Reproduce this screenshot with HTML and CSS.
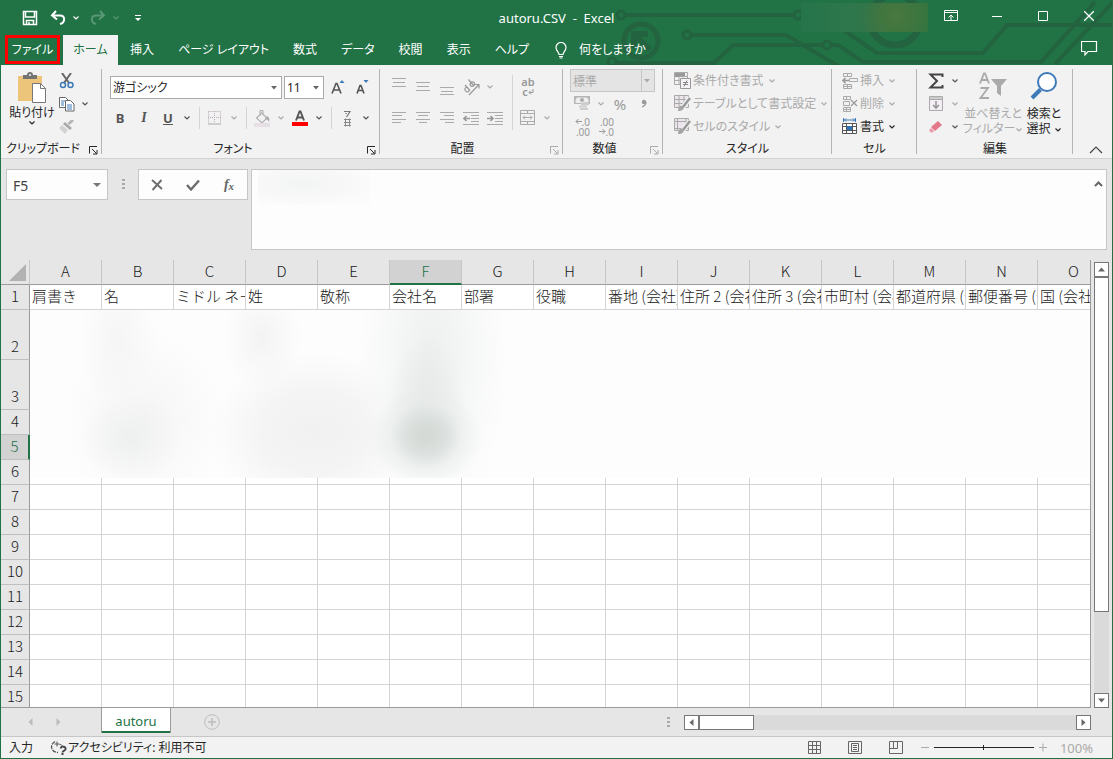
FILE: index.html
```html
<!DOCTYPE html>
<html lang="ja">
<head>
<meta charset="utf-8">
<meta name="viewport" content="width=device-width, initial-scale=1">
<title>autoru.CSV - Excel</title>
<link rel="stylesheet" href="styles.css">
</head>
<body>
<svg class="defs" aria-hidden="true">
  <symbol id="chev" viewBox="0 0 8 6"><path d="M1.5 1.5 4 4 6.500 1.500" fill="none" stroke="currentColor" stroke-width="1.200"/></symbol>
  <symbol id="tri" viewBox="0 0 8 6"><path d="M1 1h6L4 4.500z" fill="currentColor"/></symbol>
  <symbol id="launch" viewBox="0 0 9 9"><path d="M.5 7.500V.5H8M3 3l4.500 4.500M8 4v4H4" fill="none" stroke="currentColor"/></symbol>
</svg>
<div class="window">
  <header class="top">
    <svg class="circuit" viewBox="0 0 513 65" aria-hidden="true">
      <g fill="none" stroke="#23633f" stroke-width="4">
        <circle cx="21" cy="15" r="4" stroke-width="3"/><path d="M25 15h170"/>
        <circle cx="198" cy="15" r="4" stroke-width="3"/>
        <circle cx="41" cy="41" r="17" stroke-width="5"/><path d="M34 48V34h14M34 34l16 16" stroke-width="6"/>
        <circle cx="87" cy="35" r="4" stroke-width="3"/><path d="M91 35h95l54 32"/>
        <circle cx="12" cy="62" r="4" stroke-width="3"/><path d="M16 63h98l19-18h91"/>
        <circle cx="227" cy="45" r="4" stroke-width="3"/><path d="M231 45h7l25 17h178l54-60"/>
        <path d="M239 27l38 26h106l24-28h106M455 64l58-62"/>
        <circle cx="295" cy="20" r="25" stroke-width="7"/>
      </g>
    </svg>
    <div class="titlebar">
      <div class="quick">
        <button aria-label="上書き保存"><svg width="16" height="16" viewBox="0 0 16 16"><path d="M1.500 1.500h13v13h-13zM3.500 2v5h9V2M4.500 14.500v-4h7v4M7 12v2" fill="none" stroke="#fff" stroke-width="1.500"/></svg></button>
        <button aria-label="元に戻す"><svg width="16" height="16" viewBox="0 0 16 16"><path d="M6 1 2 5.500 7 9.500M2.500 5.500h7.500c5.500 0 5.500 7 0 8.500" fill="none" stroke="#fff" stroke-width="2"/></svg></button>
        <button class="narrow" aria-label="元に戻す一覧"><svg width="8" height="6"><use href="#chev"/></svg></button>
        <button class="dim" aria-label="やり直し"><svg width="16" height="16" viewBox="0 0 16 16"><path d="M10 1l4 4.500-5 4M13.500 5.500H6c-5.500 0-5.500 7 0 8.500" fill="none" stroke="#fff" stroke-width="2"/></svg></button>
        <button class="narrow dim" aria-label="やり直し一覧"><svg width="8" height="6"><use href="#chev"/></svg></button>
        <button aria-label="クイック アクセスのカスタマイズ"><svg width="8" height="8" viewBox="0 0 8 8"><path d="M1 1.500h6" stroke="#fff"/><path d="M1 4h6L4 7z" fill="#fff"/></svg></button>
      </div>
      <h1>autoru.CSV&nbsp; -&nbsp; Excel</h1>
      <div class="sys">
        <div class="account"></div>
        <button aria-label="リボンの表示オプション"><svg width="14" height="12" viewBox="0 0 14 12"><path d="M.5.5h13v10H.5zM.5 2.500h13M7 10V5M4.500 7.500 7 5l2.500 2.500" fill="none" stroke="#fff"/></svg></button>
        <button aria-label="最小化"><svg width="10" height="11" viewBox="0 0 10 11"><path d="M0 5.500h10" stroke="#fff"/></svg></button>
        <button aria-label="最大化"><svg width="10" height="10" viewBox="0 0 10 10"><path d="M.5.5h9v9h-9z" fill="none" stroke="#fff"/></svg></button>
        <button aria-label="閉じる"><svg width="10" height="10" viewBox="0 0 10 10"><path d="M0 0l10 10M10 0 0 10" stroke="#fff" stroke-width="1.300"/></svg></button>
      </div>
    </div>
    <nav class="tabs">
      <button class="file">ファイル</button>
      <button class="on">ホーム</button>
      <button>挿入</button>
      <button>ページ レイアウト</button>
      <button>数式</button>
      <button>データ</button>
      <button>校閲</button>
      <button>表示</button>
      <button>ヘルプ</button>
      <button class="tell"><svg width="12" height="17" viewBox="0 0 12 17"><path d="M4 12.500C4 10 1 9 1 5.500a5 5 0 0 1 10 0C11 9 8 10 8 12.500zM4 14.500h4M4.500 16h3" fill="none" stroke="#fff" stroke-width="1.200"/></svg>何をしますか</button>
      <button class="comment" aria-label="コメント"><svg width="17" height="16" viewBox="0 0 17 16"><path d="M.5.500h15v10H7l-3 3.500v-3.500H.5z" fill="none" stroke="#fff" stroke-width="1.200"/></svg></button>
    </nav>
  </header>

  <section class="ribbon">
    <div class="group clip">
      <div class="body">
        <button class="big"><svg width="30" height="33" viewBox="0 0 30 33"><path d="M1 4h24v25H1z" fill="#edc57a"/><path d="M6 7V3h4a3 3 0 0 1 6 0h4v4z" fill="#737373"/><circle cx="13" cy="3" r="1" fill="#f2f2f2"/><path d="M15.500 11.500h8l5 5v14h-13z" fill="#fff" stroke="#777"/><path d="M23.500 11.500v5h5" fill="none" stroke="#777"/></svg><span>貼り付け</span><svg width="8" height="6"><use href="#chev"/></svg></button>
        <div class="stack">
          <button aria-label="切り取り"><svg width="16" height="16" viewBox="0 0 16 16"><path d="M3 0l7 10M12 0 5 10" stroke="#666" stroke-width="2"/><circle cx="4" cy="12" r="2.500" fill="none" stroke="#3f7ab8" stroke-width="1.500"/><circle cx="11.500" cy="12" r="2.500" fill="none" stroke="#3f7ab8" stroke-width="1.500"/></svg></button>
          <div class="line"><button aria-label="コピー"><svg width="16" height="16" viewBox="0 0 16 16"><path d="M.5 1.500h6l3 3v7h-9z" fill="#fff" stroke="#666"/><path d="M2 5h4M2 7h3M2 9h3" stroke="#3f7ab8"/><path d="M6.500 4.500h5l3.500 3.500v7H6.500z" fill="#fff" stroke="#666"/><path d="M8 9h5M8 11h5M8 13h5" stroke="#3f7ab8"/></svg></button><button class="narrow" aria-label="コピーの一覧"><svg width="8" height="6"><use href="#chev"/></svg></button></div>
          <button aria-label="書式のコピー"><svg width="16" height="14" viewBox="0 0 16 14"><path d="M14 0 9.500 4" stroke="#b5b5b5" stroke-width="3"/><path d="M6 2l7 6-2 2-7-6z" fill="#a9a9a9"/><path d="M3 5l6 5-3 4-6-6z" fill="#d2d2d2"/></svg></button>
        </div>
      </div>
      <footer><span>クリップボード</span><button class="launch" aria-label="クリップボードの設定"><svg width="9" height="9"><use href="#launch"/></svg></button></footer>
    </div>

    <div class="group font">
      <div class="rows">
        <div class="line fontline">
          <label class="combo name"><select aria-label="フォント"><option>游ゴシック</option></select><svg width="8" height="6"><use href="#tri"/></svg></label>
          <label class="combo size"><select aria-label="フォント サイズ"><option>11</option></select><svg width="8" height="6"><use href="#tri"/></svg></label>
          <button aria-label="フォント サイズの拡大"><svg width="14" height="16" viewBox="0 0 14 16"><path d="M1 14.500 5 4.500h1l4 10M2.500 11h6" fill="none" stroke="#555" stroke-width="1.600"/><path d="M8.500 4h5L11 1z" fill="#3f7ab8"/></svg></button>
          <button aria-label="フォント サイズの縮小"><svg width="14" height="16" viewBox="0 0 14 16"><path d="M2 14.500 5 6.500h1l3 8M3 11.500h5" fill="none" stroke="#555" stroke-width="1.600"/><path d="M8.500 1h5L11 4z" fill="#3f7ab8"/></svg></button>
        </div>
        <div class="line">
          <button class="b">B</button><button class="i">I</button><button class="u">U</button><button class="narrow" aria-label="下線の種類"><svg width="8" height="6"><use href="#chev"/></svg></button>
          <i class="sep"></i>
          <button class="off" aria-label="罫線"><svg width="14" height="14" viewBox="0 0 14 14"><path d="M.5.5h12v12M.5.500v12M6.500 0v12M0 6.500h13" fill="none" stroke="#b9adb9" stroke-dasharray="1 1"/><path d="M0 13h13" stroke="#aaa"/></svg></button><button class="narrow off" aria-label="罫線の種類"><svg width="8" height="6"><use href="#chev"/></svg></button>
          <i class="sep"></i>
          <button class="off" aria-label="塗りつぶしの色"><svg width="17" height="17" viewBox="0 0 17 17"><path d="M7.500 3 13 8l-5 5-5.500-5zM6 6V1.500c0-1.500 3-1.500 3 0V4" fill="none" stroke="#b0b0b0" stroke-width="1.200"/><path d="M13 6c2 1 3 3 2 6-1-2-2-3-4-3z" fill="#aaa"/><path d="M0 13h16v4H0z" fill="#e6dfe6"/></svg></button><button class="narrow off" aria-label="塗りつぶしの色の一覧"><svg width="8" height="6"><use href="#chev"/></svg></button>
          <button aria-label="フォントの色"><svg width="16" height="16" viewBox="0 0 16 16"><path d="M4 10.500 7.500 1.500h1l3.500 9M5.500 7.500h5" fill="none" stroke="#555" stroke-width="1.900"/><path d="M0 12h16v4H0z" fill="#f00"/></svg></button><button class="narrow" aria-label="フォントの色の一覧"><svg width="8" height="6"><use href="#chev"/></svg></button>
          <i class="sep"></i>
          <button aria-label="ふりがなの表示"><svg width="9" height="17" viewBox="0 0 9 17"><path d="M1 1.500h6L3.500 7M3 3v1" fill="none" stroke="#777" stroke-width="1.200"/><path d="M1 9.500h7M1 12.500h7M1 15.500h7M2.500 8.500v8M6.500 8.500v8" fill="none" stroke="#888"/></svg></button><button class="narrow" aria-label="ふりがなの一覧"><svg width="8" height="6"><use href="#chev"/></svg></button>
        </div>
      </div>
      <footer><span>フォント</span><button class="launch" aria-label="フォントの設定"><svg width="9" height="9"><use href="#launch"/></svg></button></footer>
    </div>

    <div class="group align off">
      <div class="body">
        <div class="rows">
          <div class="line">
            <button aria-label="上揃え"><svg width="14" height="18"><path d="M0 .5h14M1 4.500h12M0 8.500h14" stroke="#aaa"/></svg></button>
            <button aria-label="上下中央揃え"><svg width="14" height="18"><path d="M0 4.500h14M1 8.500h12M0 12.500h14" stroke="#aaa"/></svg></button>
            <button aria-label="下揃え"><svg width="14" height="18"><path d="M0 9.500h14M1 13.500h12M0 16.500h14" stroke="#aaa"/></svg></button>
            <button aria-label="方向"><svg width="17" height="17" viewBox="0 0 17 17"><path d="M6 16 15.500 6M12 5.500h4v4" fill="none" stroke="#999" stroke-width="1.200"/><path d="M2 6l5 5.500M5.500 9.500C3.500 7 .5 9.500 2.500 11.800S7.500 12 5.500 9.500M5.500.500l5 6M7.500 4c2.500-2.500 5.500.500 3.500 2.500S6 6.500 7.500 4" fill="none" stroke="#999" stroke-width="1.200"/></svg></button><button class="narrow" aria-label="方向の一覧"><svg width="8" height="6"><use href="#chev"/></svg></button>
          </div>
          <div class="line">
            <button aria-label="左揃え"><svg width="14" height="12"><path d="M0 .5h14M0 3.500h10M0 7.500h14M0 10.500h9" stroke="#aaa"/></svg></button>
            <button aria-label="中央揃え"><svg width="14" height="12"><path d="M0 .5h14M2 3.500h10M0 7.500h14M3 10.500h8" stroke="#aaa"/></svg></button>
            <button aria-label="右揃え"><svg width="14" height="12"><path d="M0 .5h14M4 3.500h10M0 7.500h14M5 10.500h9" stroke="#aaa"/></svg></button>
            <button aria-label="インデントを減らす"><svg width="16" height="13" viewBox="0 0 16 13"><path d="M0 .5h16M8 3.500h8M8 6.500h8M8 9.500h8M0 12.500h16" stroke="#aaa"/><path d="M7 6.500H1M3.500 4 1 6.500 3.500 9" fill="none" stroke="#999" stroke-width="1.600"/></svg></button>
            <button aria-label="インデントを増やす"><svg width="16" height="13" viewBox="0 0 16 13"><path d="M0 .5h16M8 3.500h8M8 6.500h8M8 9.500h8M0 12.500h16" stroke="#aaa"/><path d="M0 6.500h6M3.500 4 6 6.500 3.500 9" fill="none" stroke="#999" stroke-width="1.600"/></svg></button>
          </div>
        </div>
        <i class="sep tall"></i>
        <div class="rows">
          <div class="line"><button class="wrap" aria-label="折り返して全体を表示する"><span>ab</span><span>c<svg width="6" height="6" viewBox="0 0 6 6"><path d="M5 0v3.500H1M3 1.500l-2 2 2 2" fill="none" stroke="#999"/></svg></span></button></div>
          <div class="line"><button aria-label="セルを結合して中央揃え"><svg width="16" height="16" viewBox="0 0 16 16"><path d="M.5.5h14v14H.500zM.5 3.500h14M.5 11.500h14M7.500 0v3M7.500 12v3M3 7.500h9M5 5.500l-2 2 2 2M10 5.500l2 2-2 2" fill="none" stroke="#aaa"/></svg></button><button class="narrow" aria-label="結合の一覧"><svg width="8" height="6"><use href="#chev"/></svg></button></div>
        </div>
      </div>
      <footer><span>配置</span><button class="launch" aria-label="配置の設定"><svg width="9" height="9"><use href="#launch"/></svg></button></footer>
    </div>

    <div class="group number off">
      <div class="three">
        <label class="combo format"><select aria-label="表示形式" disabled><option>標準</option></select><svg width="8" height="6"><use href="#tri"/></svg></label>
        <div class="line">
          <button aria-label="通貨表示形式"><svg width="16" height="15" viewBox="0 0 16 15"><path d="M0 0h16v8H0z" fill="#b5b5b5"/><path d="M3 1.500h10l1.500 2v3H10l-3 .5H1.500v-3z" fill="#eee"/><circle cx="8" cy="4" r="2" fill="#aaa"/><path d="M7 8h8M5 10.500h8M6 13h8" stroke="#ccc" stroke-width="2"/></svg></button><button class="narrow" aria-label="通貨の一覧"><svg width="8" height="6"><use href="#chev"/></svg></button>
          <button class="pct">%</button>
          <button aria-label="桁区切りスタイル"><svg width="6" height="9" viewBox="0 0 6 9"><circle cx="3" cy="3" r="2.200" fill="#999"/><path d="M5 3c0 2.500-1.500 4-4 5" fill="none" stroke="#999" stroke-width="1.300"/></svg></button>
        </div>
        <div class="line dec">
          <button aria-label="小数点以下の表示桁数を増やす"><span><svg width="7" height="7" viewBox="0 0 7 7"><path d="M7 3.500H1M3.500 1 1 3.500 3.500 6" fill="none" stroke="#999"/></svg>.0</span><span>.00</span></button>
          <button aria-label="小数点以下の表示桁数を減らす"><span>.00</span><span><svg width="7" height="7" viewBox="0 0 7 7"><path d="M0 3.500h6M3.500 1 6 3.500 3.500 6" fill="none" stroke="#999"/></svg>.0</span></button>
        </div>
      </div>
      <footer><span>数値</span><button class="launch" aria-label="数値の設定"><svg width="9" height="9"><use href="#launch"/></svg></button></footer>
    </div>

    <div class="group style">
      <div class="three off">
        <button class="row"><svg width="17" height="17" viewBox="0 0 17 17"><path d="M.5.5h13v12H.5zM.500 4.500h13M.5 8.500h5M5 .5v12M9 .5v5" fill="none" stroke="#aaa"/><path d="M1 1h4v4H1zM5 1h6v3H5z" fill="#999"/><path d="M6.500 6.500h10v10h-10z" fill="#f5f2f5" stroke="#999"/><path d="M9 10.500h5M9 12.500h5M13 8.500l-3 6" stroke="#888"/></svg>条件付き書式<svg width="8" height="6"><use href="#chev"/></svg></button>
        <button class="row"><svg width="17" height="17" viewBox="0 0 17 17"><path d="M.5.5h14v12H.5zM.5 4.500h14M.5 8.500h14M5 .5v12M10 .5v12" fill="#ece6ec" stroke="#aaa"/><path d="M16 3 9 12" stroke="#f2f2f2" stroke-width="5"/><path d="M16 3 9 12" stroke="#999" stroke-width="2.500"/><path d="M4 16c0-4 2-6 5-5 2 3-1 5-5 5z" fill="#a5a5a5"/></svg>テーブルとして書式設定<svg width="8" height="6"><use href="#chev"/></svg></button>
        <button class="row"><svg width="17" height="17" viewBox="0 0 17 17"><path d="M.5.5h14v12H.5zM.5 3.500h14M.5 10.500h14M3.500 .5v12M12 .5v12" fill="#ece6ec" stroke="#aaa"/><path d="M16 3 9 12" stroke="#f2f2f2" stroke-width="5"/><path d="M16 3 9 12" stroke="#999" stroke-width="2.500"/><path d="M4 16c0-4 2-6 5-5 2 3-1 5-5 5z" fill="#a5a5a5"/></svg>セルのスタイル<svg width="8" height="6"><use href="#chev"/></svg></button>
      </div>
      <footer><span>スタイル</span></footer>
    </div>

    <div class="group cells">
      <div class="three">
        <button class="row off"><svg width="16" height="16" viewBox="0 0 16 16"><path d="M1.500.5h8v3h-8zM1.500 11.500h8v4h-8zM5.500.5v3M5.500 11.500v4M1.500 13.500h8M7.500 5.500h8v3h-8z" fill="none" stroke="#aaa"/><path d="M7 7.500H1M3.500 5 1 7.500 3.500 10" fill="none" stroke="#999" stroke-width="1.600"/></svg>挿入<svg class="end" width="8" height="6"><use href="#chev"/></svg></button>
        <button class="row off"><svg width="16" height="16" viewBox="0 0 16 16"><path d="M1.500.5h7v3h-7zM1.500 11.500h7v4h-7zM4.500.5v3M4.500 11.500v4M1.500 13.500h7M1.500 5.500h6v4h-6z" fill="none" stroke="#aaa"/><path d="M9 4l6 6M15 4l-6 6" stroke="#999" stroke-width="1.300"/></svg>削除<svg class="end" width="8" height="6"><use href="#chev"/></svg></button>
        <button class="row strong"><svg width="16" height="17" viewBox="0 0 16 17"><path d="M1.500 0v4M13.500 0v4M2 2h11M4 .500 2.500 2 4 3.500M11 .5 12.500 2 11 3.500" fill="none" stroke="#3f7ab8"/><path d="M.5 5.500h14v10H.5zM.5 8.500h14M.5 12.500h14M4.500 5.500v10M10.500 5.500v10" fill="#fff" stroke="#555"/><path d="M5 8h5v4H5z" fill="#2f73b6"/></svg>書式<svg width="8" height="6"><use href="#chev"/></svg></button>
      </div>
      <footer><span>セル</span></footer>
    </div>

    <div class="group edit">
      <div class="body">
        <div class="three sums">
          <div class="line"><button aria-label="合計"><svg width="16" height="16" viewBox="0 0 16 16"><path d="M14.500 4V1.500h-12L9 8l-6.500 6.500h12V12" fill="none" stroke="#444" stroke-width="2"/></svg></button><button class="narrow" aria-label="合計の一覧"><svg width="8" height="6"><use href="#chev"/></svg></button></div>
          <div class="line off"><button aria-label="フィル"><svg width="15" height="15" viewBox="0 0 15 15"><path d="M.5.5h13v14H.5zM.5 3.500h13" fill="#f3eef3" stroke="#aaa"/><path d="M1 1h12v2H1z" fill="#ccc"/><path d="M7 5v7M4 9l3 3 3-3" fill="none" stroke="#999" stroke-width="1.600"/></svg></button><button class="narrow" aria-label="フィルの一覧"><svg width="8" height="6"><use href="#chev"/></svg></button></div>
          <div class="line"><button aria-label="クリア"><svg width="14" height="14" viewBox="0 0 14 14"><path d="M9 1l4 4-7 6-4-4z" fill="#e4798a"/><path d="M2 8l3 3-1.500 1.500H2L0 10.500z" fill="#ec9aa7"/></svg></button><button class="narrow" aria-label="クリアの一覧"><svg width="8" height="6"><use href="#chev"/></svg></button></div>
        </div>
        <button class="big off"><svg width="30" height="30" viewBox="0 0 30 30"><path d="M2 12.500 6 2.500h1l4 10M3.500 9h6M2.500 17h7.500L2.500 27h8.500" fill="none" stroke="#a9a9a9" stroke-width="1.800"/><path d="M13 8h16l-6 7v10l-4-3v-7z" fill="#aaa"/></svg><span>並べ替えと<br>フィルター<svg width="8" height="6"><use href="#chev"/></svg></span></button>
        <button class="big"><svg width="30" height="30" viewBox="0 0 30 30"><circle cx="18" cy="11" r="9" fill="#fff" stroke="#3f7ab8" stroke-width="2"/><path d="M11.500 18.500 3 27" stroke="#3f7ab8" stroke-width="4"/></svg><span>検索と<br>選択 <svg width="8" height="6"><use href="#chev"/></svg></span></button>
      </div>
      <footer><span>編集</span></footer>
    </div>
    <button class="collapse" aria-label="リボンを折りたたむ"><svg width="14" height="8" viewBox="0 0 14 8"><path d="M1 7l6-6 6 6" fill="none" stroke="#444" stroke-width="1.200"/></svg></button>
  </section>

  <section class="formula">
    <div class="namebox"><input aria-label="名前ボックス" value="F5"><button aria-label="名前の一覧"><svg width="10" height="6" viewBox="0 0 10 6"><path d="M1 1h8L5 5z" fill="#777"/></svg></button></div>
    <i class="dots"></i>
    <div class="fx">
      <button aria-label="キャンセル"><svg width="12" height="12" viewBox="0 0 12 12"><path d="M1 1l10 9M10.500 1 1.500 11" stroke="#6e6e6e" stroke-width="1.900"/></svg></button>
      <button aria-label="入力"><svg width="14" height="12" viewBox="0 0 14 12"><path d="M1 6l4 4.500L13 1.500" fill="none" stroke="#6e6e6e" stroke-width="2.400"/></svg></button>
      <button class="fn" aria-label="関数の挿入">f<small>x</small></button>
    </div>
    <div class="entry"><textarea aria-label="数式バー"></textarea><div class="haze"></div><button aria-label="数式バーの折りたたみ"><svg width="9" height="6" viewBox="0 0 9 6"><path d="M1 5l3.500-3.500L8 5" fill="none" stroke="#666" stroke-width="2"/></svg></button></div>
  </section>

  <main class="work">
    <div class="sheet">
      <table>
        <colgroup><col class="rh"><col span="15"></colgroup>
        <thead><tr><th class="corner"><svg width="18" height="18" viewBox="0 0 18 18"><path d="M17 0v17H0z" fill="#b2b2b2"/></svg></th><th>A</th><th>B</th><th>C</th><th>D</th><th>E</th><th class="sel">F</th><th>G</th><th>H</th><th>I</th><th>J</th><th>K</th><th>L</th><th>M</th><th>N</th><th>O</th></tr></thead>
        <tbody>
          <tr><th>1</th><td>肩書き</td><td>名</td><td>ミドル ネーム</td><td>姓</td><td>敬称</td><td>会社名</td><td>部署</td><td>役職</td><td>番地 (会社)</td><td>住所 2 (会社)</td><td>住所 3 (会社)</td><td>市町村 (会社)</td><td>都道府県 (会社)</td><td>郵便番号 (会社)</td><td>国 (会社)</td></tr>
          <tr class="tall"><th>2</th><td></td><td></td><td></td><td></td><td></td><td></td><td></td><td></td><td></td><td></td><td></td><td></td><td></td><td></td><td></td></tr>
          <tr class="tall"><th>3</th><td></td><td></td><td></td><td></td><td></td><td></td><td></td><td></td><td></td><td></td><td></td><td></td><td></td><td></td><td></td></tr>
          <tr><th>4</th><td></td><td></td><td></td><td></td><td></td><td></td><td></td><td></td><td></td><td></td><td></td><td></td><td></td><td></td><td></td></tr>
          <tr><th class="sel">5</th><td></td><td></td><td></td><td></td><td></td><td></td><td></td><td></td><td></td><td></td><td></td><td></td><td></td><td></td><td></td></tr>
          <tr><th>6</th><td></td><td></td><td></td><td></td><td></td><td></td><td></td><td></td><td></td><td></td><td></td><td></td><td></td><td></td><td></td></tr>
          <tr><th>7</th><td></td><td></td><td></td><td></td><td></td><td></td><td></td><td></td><td></td><td></td><td></td><td></td><td></td><td></td><td></td></tr>
          <tr><th>8</th><td></td><td></td><td></td><td></td><td></td><td></td><td></td><td></td><td></td><td></td><td></td><td></td><td></td><td></td><td></td></tr>
          <tr><th>9</th><td></td><td></td><td></td><td></td><td></td><td></td><td></td><td></td><td></td><td></td><td></td><td></td><td></td><td></td><td></td></tr>
          <tr><th>10</th><td></td><td></td><td></td><td></td><td></td><td></td><td></td><td></td><td></td><td></td><td></td><td></td><td></td><td></td><td></td></tr>
          <tr><th>11</th><td></td><td></td><td></td><td></td><td></td><td></td><td></td><td></td><td></td><td></td><td></td><td></td><td></td><td></td><td></td></tr>
          <tr><th>12</th><td></td><td></td><td></td><td></td><td></td><td></td><td></td><td></td><td></td><td></td><td></td><td></td><td></td><td></td><td></td></tr>
          <tr><th>13</th><td></td><td></td><td></td><td></td><td></td><td></td><td></td><td></td><td></td><td></td><td></td><td></td><td></td><td></td><td></td></tr>
          <tr><th>14</th><td></td><td></td><td></td><td></td><td></td><td></td><td></td><td></td><td></td><td></td><td></td><td></td><td></td><td></td><td></td></tr>
          <tr><th>15</th><td></td><td></td><td></td><td></td><td></td><td></td><td></td><td></td><td></td><td></td><td></td><td></td><td></td><td></td><td></td></tr>
        </tbody>
      </table>
      <div class="mask"></div>
    </div>
    <div class="vbar">
      <button aria-label="上へ"><svg width="7" height="5" viewBox="0 0 7 5"><path d="M0 4.500h7L3.500.5z" fill="#666"/></svg></button>
      <div class="thumb"></div>
      <button class="last" aria-label="下へ"><svg width="7" height="5" viewBox="0 0 7 5"><path d="M0 .5h7L3.500 4.500z" fill="#666"/></svg></button>
    </div>
  </main>

  <div class="sheets">
    <button class="nav" aria-label="前のシート"><svg width="5" height="8" viewBox="0 0 5 8"><path d="M4.500 0v8L.5 4z" fill="#bcbcbc"/></svg></button>
    <button class="nav" aria-label="次のシート"><svg width="5" height="8" viewBox="0 0 5 8"><path d="M.5 0v8l4-4z" fill="#bcbcbc"/></svg></button>
    <button class="tab">autoru</button>
    <button class="add" aria-label="新しいシート"><svg width="16" height="16" viewBox="0 0 16 16"><circle cx="8" cy="8" r="7.300" fill="none" stroke="#bdbdbd"/><path d="M8 4v8M4 8h8" stroke="#bdbdbd" stroke-width="1.600"/></svg></button>
    <i class="dots"></i>
    <div class="hbar">
      <button aria-label="左へ"><svg width="5" height="7" viewBox="0 0 5 7"><path d="M4.500 0v7L.5 3.500z" fill="#666"/></svg></button>
      <div class="thumb"></div>
      <button class="last" aria-label="右へ"><svg width="5" height="7" viewBox="0 0 5 7"><path d="M.5 0v7l4-3.500z" fill="#666"/></svg></button>
    </div>
  </div>

  <footer class="status">
    <span class="mode">入力</span>
    <svg width="18" height="15" viewBox="0 0 18 15"><path d="M5 1.500C-1 5 1 12 8 12.500" fill="none" stroke="#555" stroke-width="1.300" stroke-dasharray="4 1"/><path d="M7 1.500v5M4.500 4h5M9.500 4.500c2 0 3 1 3 2" fill="none" stroke="#555"/><path d="M10.500 8.500c1-3 6-2 5 1-1 1.500-3 1.500-3 3M11.500 14h2" fill="none" stroke="#444" stroke-width="1.800"/></svg>
    <span>アクセシビリティ: 利用不可</span>
    <div class="views">
      <button aria-label="標準"><svg width="13" height="13" viewBox="0 0 13 13"><path d="M.5.5h12v12H.5zM.5 4.500h12M.5 8.500h12M4.500.5v12M8.500.5v12" fill="none" stroke="#666"/></svg></button>
      <button aria-label="ページ レイアウト"><svg width="14" height="13" viewBox="0 0 14 13"><path d="M.5.5h13v12H.5zM3.500 2.500h7v8h-7zM5 4.500h4M5 6.500h4M5 8.500h4" fill="none" stroke="#666"/></svg></button>
      <button aria-label="改ページ プレビュー"><svg width="14" height="13" viewBox="0 0 14 13"><path d="M.5.5h13v12H.5zM.5 7.500h8V.5M4.500.5v7" fill="none" stroke="#666"/></svg></button>
    </div>
    <div class="zoom">
      <button aria-label="縮小"><svg width="8" height="9"><path d="M0 4.500h8" stroke="#aaa"/></svg></button>
      <input type="range" aria-label="ズーム" min="0" max="100" value="50">
      <button aria-label="拡大"><svg width="8" height="9"><path d="M0 4.500h8M4 .5v8" stroke="#aaa"/></svg></button>
      <span>100%</span>
    </div>
  </footer>
</div>
</body>
</html>
```
FILE: styles.css
```css
* { box-sizing: border-box; }
body {
  margin: 0;
  font: 12px/16px "Noto Sans", "Noto Sans CJK JP", sans-serif;
  font-feature-settings: "palt";
  color: #262626;
}
button, input, select, textarea {
  font: inherit;
  font-feature-settings: inherit;
  color: inherit;
  background: none;
  border: 0;
  border-radius: 0;
  padding: 0;
  margin: 0;
  outline: 0;
}
button { display: flex; align-items: center; justify-content: center; white-space: nowrap; }
svg { display: block; flex: none; }
.defs { position: absolute; width: 0; height: 0; }

.window {
  display: flex;
  flex-direction: column;
  height: 100vh;
  border: 1px solid #217346;
  border-top: 0;
  background: #e6e6e6;
  overflow: hidden;
}

/* title bar and ribbon tabs */
.top { position: relative; flex: none; background: #217346; color: #fff; }
.circuit { position: absolute; right: -1px; top: 0; width: 513px; height: 65px; }
.titlebar { position: relative; display: grid; grid-template-columns: 1fr auto 1fr; height: 35px; }
.quick { display: flex; align-items: center; padding-left: 17px; }
.quick button { width: 24px; height: 24px; }
.quick button + button { margin-left: 4px; }
.quick .narrow { width: 12px; margin-left: 0; }
.quick .dim { opacity: .25; }
.titlebar h1 { margin: 0; font-size: 13px; font-weight: 400; line-height: 36px; }
.sys { display: flex; justify-content: flex-end; height: 32px; }
.sys button { width: 46px; height: 32px; }
.account { flex: none; width: 127px; height: 29px; margin-top: 3px; background: radial-gradient(circle at 75% 45%, #48793e, #42763f 14%, rgba(66, 118, 63, 0) 38%), linear-gradient(90deg, #25744a, #2e774c 35%, #32754a 60%, #33743e); }
.tabs { position: relative; display: flex; height: 30px; padding-left: 4px; }
.tabs button { padding: 0 12px; }
.tabs .file { width: 55px; height: 29px; padding: 0; border: 3px solid #f00; }
.tabs .on { width: 55px; padding: 0; margin-left: 3px; background: #f2f2f2; color: #217346; }
.tabs .tell { gap: 12px; padding-left: 14px; }
.tabs .comment { margin-left: auto; padding: 0 14px 2px 0; }

/* ribbon */
.ribbon { flex: none; display: flex; height: 94px; padding-top: 4px; background: #f2f2f2; border-bottom: 1px solid #d2d2d2; color: #555; }
.group { display: flex; flex-direction: column; height: 89px; background: linear-gradient(#b4b4b4, #b4b4b4) right top / 1px 85px no-repeat; }
.group > footer { position: relative; display: flex; justify-content: center; margin-top: auto; height: 17px; color: #262626; }
.launch { position: absolute; right: 4px; top: 5px; }
.off .launch { color: #aaa; }
.body, .line { display: flex; }
.line { align-items: center; }
.line button { width: 24px; height: 24px; }
.line .narrow { width: 14px; }
.off, .line .off { color: #aaa; }
.strong { color: #262626; }
.sep { flex: none; width: 1px; height: 22px; margin: 0 3px 0 5px; background: #d4d4d4; }
.sep.tall { height: 55px; margin: 6px 3px 0 5px; }
.rows { display: flex; flex-direction: column; gap: 7px; padding-top: 6px; }
.three { display: flex; flex-direction: column; }
.three .line, .row { height: 23px; }
.row { gap: 2px; justify-content: flex-start; }
.row svg:last-child { margin-left: 2px; }
.row .end { margin-left: auto; }
.big { flex-direction: column; justify-content: flex-start; }
.big span { line-height: 15px; }
.big span svg { display: inline-block; vertical-align: middle; }

.clip { width: 101px; }
.clip .big { width: 48px; margin: 3px 2px 0 7px; color: #262626; }
.clip .stack { display: flex; flex-direction: column; align-items: flex-start; }
.clip .stack button { height: 23px; width: 18px; }
.clip .stack .narrow { width: 18px; }
.clip footer { padding-right: 17px; }

.combo { position: relative; display: block; height: 23px; }
.combo select { width: 100%; height: 100%; padding: 2px 2px 0; appearance: none; border: 1px solid #ababab; background: #fff; color: #262626; opacity: 1; }
.combo svg { position: absolute; right: 4px; top: 9px; color: #666; }
.font { width: 278px; }
.font .rows { padding-left: 6px; }
.fontline { padding-left: 2px; }
.name { width: 172px; margin-right: 2px; }
.size { width: 40px; margin-right: 2px; }
.font .b, .font .i, .font .u { font-size: 13px; font-weight: 700; }
.font .i { font-style: italic; font-family: "Liberation Serif", serif; font-size: 14px; }
.font .u { text-decoration: underline; }
.font footer { padding-right: 16px; }

.align { width: 183px; }
.align .rows { padding-left: 7px; }
.align .sep + .rows { padding-left: 0; }
.align .wrap { flex-direction: column; font-size: 11px; line-height: 10px; font-weight: 600; color: #999; }
.wrap span { display: flex; align-items: center; }
.align footer { padding-right: 18px; }

.number { width: 100px; }
.number .three { padding-left: 7px; }
.format { width: 85px; }
.format select { background: #e4e4e4; border-color: #c6c6c6; color: #aaa; }
.format svg { color: #aaa; }
.format::after { content: ""; position: absolute; right: 13px; top: 0; width: 1px; height: 23px; background: #c6c6c6; }
.number .pct { font-size: 15px; color: #999; }
.number .dec button { flex-direction: column; align-items: flex-end; font: 10px/10px "Noto Sans", sans-serif; color: #999; width: 20px; height: 20px; margin-right: 4px; }
.dec span { display: flex; align-items: center; }
.number footer { padding-right: 17px; }

.style { width: 169px; }
.style .three { padding-left: 11px; }
.cells { width: 85px; }
.cells .three { padding: 0 12px 0 10px; }
.edit { width: 156px; }
.edit .sums { padding-left: 7px; }
.edit .big { margin-top: 2px; gap: 5px; }
.sums + .big { width: 58px; margin-left: 2px; }
.edit .big + .big { width: 44px; color: #262626; }
.collapse { margin: auto 9px 4px auto; }

/* formula bar */
.formula { flex: none; display: flex; align-items: flex-start; padding: 10px 5px 0; height: 101px; }
.namebox, .fx, .entry { display: flex; background: #fdfdfd; border: 1px solid #c6c6c6; }
.namebox { width: 102px; height: 31px; }
.namebox input { flex: 1; min-width: 0; padding: 3px 6px 0; font-size: 14px; color: #444; }
.namebox button { width: 20px; }
.dots { flex: none; width: 3px; height: 11px; background: repeating-linear-gradient(#aaa 0 2px, transparent 2px 4px); }
.formula .dots { margin: 10px 13px 0 14px; }
.fx { width: 110px; height: 31px; margin-right: 3px; }
.fx button { flex: 1; }
.fx .fn { font: italic 700 14px/16px "Liberation Serif", serif; color: #666; }
.fx small { font-size: 11px; padding-top: 3px; }
.entry { position: relative; flex: 1; height: 81px; }
.entry textarea { flex: 1; resize: none; }
.entry button { width: 16px; height: 28px; }
.haze { position: absolute; left: 6px; top: 0; width: 112px; height: 34px; background: radial-gradient(ellipse at 40% 40%, #f3f4f4, #f8f8f8 50%, #fbfbfb 75%); }

/* worksheet */
.work { flex: 1; min-height: 0; display: flex; gap: 3px; padding-right: 3px; }
.sheet { position: relative; flex: 1; min-width: 0; overflow: hidden; border-right: 1px solid #9b9b9b; border-bottom: 1px solid #9b9b9b; }
table { width: 1109px; border-collapse: separate; border-spacing: 0; table-layout: fixed; background: #fff; font: 300 15px/20px "Noto Sans CJK JP", sans-serif; font-feature-settings: normal; color: #1a1a1a; }
col { width: 72px; }
col.rh { width: 29px; }
th, td { height: 25px; padding: 0 0 2px; font-weight: inherit; overflow: hidden; white-space: nowrap; }
td { padding-left: 2px; border-right: 1px solid #d4d4d4; border-bottom: 1px solid #d4d4d4; }
th { background: #e6e6e6; border-right: 1px solid #9b9b9b; border-bottom: 1px solid #bfbfbf; }
thead th { border-right-color: #c6c6c6; border-bottom-color: #9b9b9b; }
thead .sel { background: #d2d2d2; color: #217346; border-bottom: 2px solid #217346; }
tbody .sel { background: #d2d2d2; color: #217346; border-right: 2px solid #217346; }
.corner svg { margin: 3px 0 0 8px; }
.tall th { height: 50px; vertical-align: bottom; padding-bottom: 3px; }
.mask {
  position: absolute; left: 29px; right: 0; top: 50px; height: 168px;
  background:
    radial-gradient(ellipse 56px 50px at 396px 126px, #d5dad7 12%, rgba(216, 222, 219, .85) 35%, rgba(230, 234, 232, .5) 65%, rgba(240, 243, 242, 0)),
    radial-gradient(ellipse 40px 70px at 396px 96px, rgba(226, 229, 228, .8), rgba(240, 243, 242, 0)),
    radial-gradient(ellipse 78px 170px at 402px 45px, #eef1f0 8%, rgba(244, 246, 245, .8) 50%, rgba(252, 252, 252, 0)),
    radial-gradient(ellipse 50px 45px at 100px 128px, #eef0ef, rgba(252, 252, 252, 0)),
    radial-gradient(ellipse 105px 80px at 285px 122px, #f1f1f1, #f4f4f4 50%, rgba(252, 252, 252, 0)),
    radial-gradient(ellipse 40px 50px at 232px 28px, #f3f3f3, rgba(252, 252, 252, 0)),
    radial-gradient(ellipse 80px 90px at 115px 110px, #f5f5f5, rgba(252, 252, 252, 0)),
    radial-gradient(ellipse 40px 70px at 88px 30px, #f5f5f5, rgba(252, 252, 252, 0)),
    #fdfdfd;
}
.vbar { flex: none; display: flex; flex-direction: column; width: 15px; margin-top: 2px; background: #dadada; }
.vbar button, .hbar button { flex: none; width: 15px; height: 15px; border: 1px solid #777; background: #fff; }
.thumb { border: 1px solid #777; background: #fff; }
.vbar .thumb { height: 75%; }
.vbar .last { margin-top: auto; }

/* sheet tabs */
.sheets { flex: none; display: flex; align-items: center; height: 28px; padding-right: 21px; }
.nav { width: 28px; height: 26px; }
.nav:first-child { margin-left: 15px; }
.tab { align-self: flex-start; width: 70px; height: 25px; margin-left: 29px; background: #fff; border: solid #9b9b9b; border-width: 0 1px; box-shadow: inset 0 -2px #217346; color: #217346; font-size: 13px; }
.add { margin-left: 33px; }
.sheets .dots { margin: 0 14px 0 auto; }
.hbar { display: flex; flex: none; width: 407px; background: #dadada; }
.hbar .thumb { width: 55px; }
.hbar .last { margin-left: auto; }

/* status bar */
.status { flex: none; display: flex; align-items: center; height: 22px; padding: 0 19px 0 8px; background: #f2f2f2; border-top: 1px solid #c6c6c6; }
.mode { margin-right: 17px; }
.views { display: flex; gap: 27px; margin-left: auto; }
.zoom { display: flex; align-items: center; margin-left: 18px; color: #aaa; }
.zoom input { appearance: none; width: 100px; height: 9px; margin: 0 5px; background: linear-gradient(#262626, #262626) 0 4px / 100% 1px no-repeat; }
.zoom input::-webkit-slider-thumb { appearance: none; width: 1px; height: 5px; background: #262626; }
.zoom span { margin-left: 13px; font-size: 13px; }
```
